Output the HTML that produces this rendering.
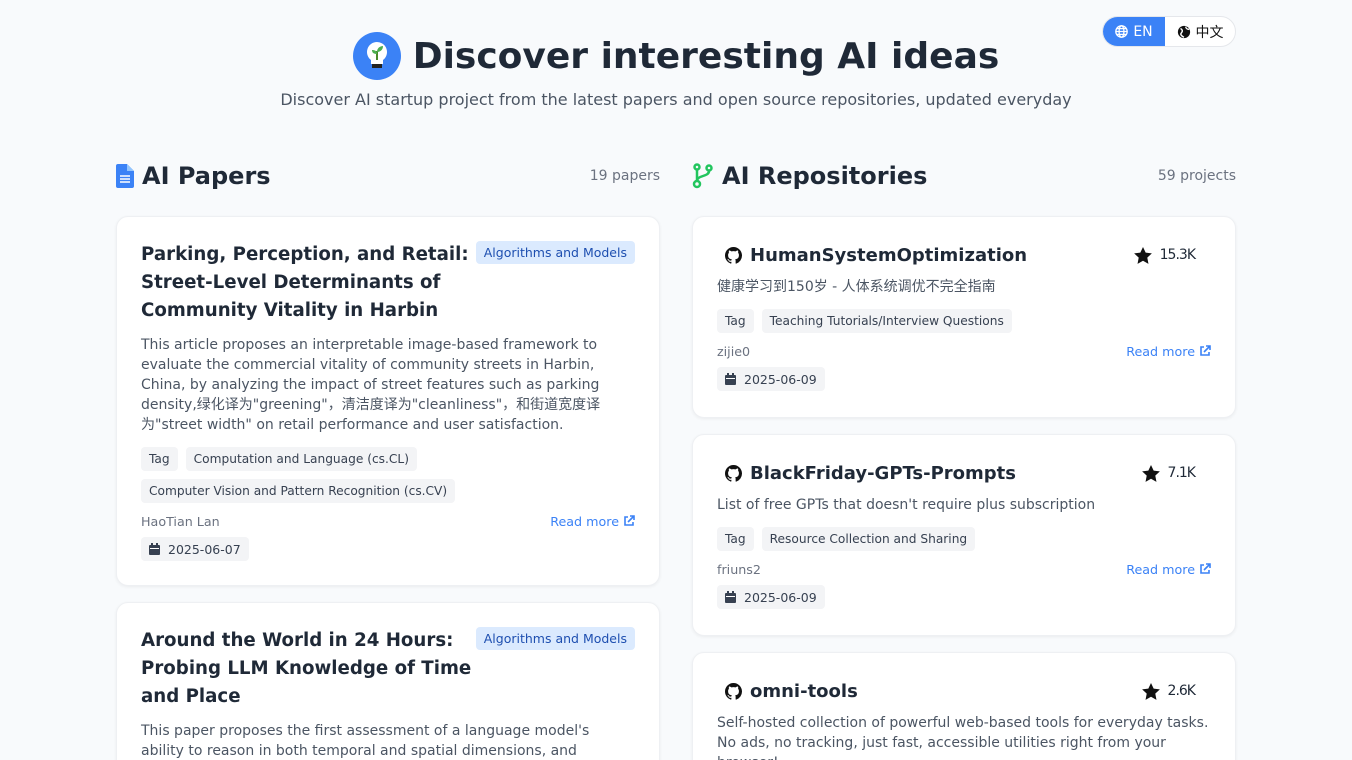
<!DOCTYPE html>
<html><head><meta charset="utf-8"><style>
*{box-sizing:border-box;margin:0;padding:0}
html,body{width:1352px;height:760px;overflow:hidden}
body{background:#f8fafc;font-family:"DejaVu Sans","Liberation Sans","Noto Sans CJK SC",sans-serif;color:#1f2937;position:relative}
.hdr{position:absolute;top:32px;left:0;width:1352px;text-align:center}
.h1{display:flex;justify-content:center;align-items:center;gap:12px;font-size:36px;font-weight:bold;color:#1f2937;height:48px}
.logo{width:48px;height:48px;border-radius:50%;background:#3b82f6;display:flex;align-items:center;justify-content:center}
.sub{margin-top:10px;font-size:16px;color:#4b5563}
.lang{position:absolute;left:1102px;top:16px;width:134px;height:31px;border-radius:16px;background:#fff;border:1px solid #e5e7eb;display:flex;overflow:hidden;font-size:14px}
.lang div{display:flex;align-items:center;justify-content:center;gap:5px}
.en{width:62px;background:#3b82f6;color:#fff}
.zh{flex:1;color:#111}
.col{position:absolute;top:160px;width:544px}
.sh{display:flex;justify-content:space-between;align-items:center;height:32px}
.sh h2{font-size:24px;font-weight:bold;display:flex;align-items:center;gap:8px}
.sh span{font-size:14px;color:#6b7280}
.card{position:absolute;left:0;width:544px;background:#fff;border:1px solid #eef0f3;border-radius:12px;box-shadow:0 1px 3px rgba(0,0,0,.06);padding:24px;overflow:hidden}
.pt{font-size:18.2px;font-weight:bold;line-height:28px;width:342px;color:#1f2937}
.badge{position:absolute;right:24px;top:24px;background:#dbeafe;color:#1e4fb0;font-size:12.5px;padding:4px 8px;border-radius:4px}
.desc{font-size:14px;line-height:20px;color:#4b5563;margin-top:10px}
.tags{display:flex;flex-wrap:wrap;gap:8px;margin-top:12px}
.tag{background:#f3f4f6;color:#374151;font-size:12.2px;height:24px;line-height:24px;padding:0 8px;border-radius:4px}
.meta{display:flex;justify-content:space-between;font-size:12.7px;color:#6b7280;margin-top:8px;height:20px;align-items:center}
.rm{color:#3b82f6;display:flex;align-items:center;gap:4px}
.date{display:inline-flex;align-items:center;gap:8px;background:#f3f4f6;font-size:12.5px;color:#374151;height:24px;padding:0 8px;border-radius:4px;margin-top:6px}
.rt{display:flex;justify-content:space-between;align-items:center;padding:0 16px 0 8px;height:28px}
.rt b{font-size:18px;display:flex;align-items:center;gap:8px}
.star{font-size:14px;display:flex;align-items:center;gap:6px;letter-spacing:-1px}
.star svg{margin-right:2px}
</style></head><body>
<svg width="0" height="0" style="position:absolute"><defs><path id="gh" fill="#111" d="M8 0C3.58 0 0 3.58 0 8c0 3.54 2.29 6.53 5.47 7.59.4.07.55-.17.55-.38v-1.33c-2.23.48-2.7-1.07-2.7-1.07-.36-.92-.89-1.17-.89-1.17-.73-.5.06-.49.06-.49.8.06 1.23.83 1.23.83.71 1.23 1.87.87 2.33.66.07-.52.28-.87.5-1.07-1.78-.2-3.64-.89-3.64-3.95 0-.87.31-1.59.82-2.15-.08-.2-.36-1.02.08-2.12 0 0 .67-.21 2.2.82a7.6 7.6 0 0 1 4 0c1.53-1.04 2.2-.82 2.2-.82.44 1.1.16 1.92.08 2.12.51.56.82 1.27.82 2.15 0 3.07-1.87 3.75-3.65 3.95.29.25.54.73.54 1.48v2.2c0 .21.15.46.55.38A8 8 0 0 0 16 8c0-4.42-3.58-8-8-8z"/></defs></svg>
<div class="hdr">
<div class="h1"><div class="logo"><svg width="30" height="34" viewBox="0 0 30 34"><path d="M15 3a10 10 0 0 0-6 18v4h12v-4a10 10 0 0 0-6-18z" fill="#fff"/><rect x="10" y="25" width="10" height="4" fill="#222"/><path d="M15 21v-9" stroke="#4a8a2a" stroke-width="2"/><path d="M15 13c0-4 3-6 6-6 0 4-3 6-6 6z" fill="#4caf50"/><path d="M15 15c0-3-2-4-5-4 0 3 2 4 5 4z" fill="#4caf50"/></svg></div>Discover interesting AI ideas</div>
<div class="sub">Discover AI startup project from the latest papers and open source repositories, updated everyday</div>
</div>
<div class="lang"><div class="en"><svg width="13" height="13" viewBox="0 0 16 16" fill="none" stroke="#fff" stroke-width="1.6"><circle cx="8" cy="8" r="7"/><ellipse cx="8" cy="8" rx="3" ry="7"/><path d="M1 8h14M2 4.5h12M2 11.5h12"/></svg>EN</div><div class="zh"><svg width="14" height="14" viewBox="0 0 16 16"><circle cx="8" cy="8" r="7" fill="#111"/><path d="M4 4c2 1 3 3 1 5s1 4 3 5M10 2c0 2 2 3 4 3" stroke="#fff" stroke-width="1.6" fill="none"/></svg>中文</div></div>

<div class="col" style="left:116px">
<div class="sh"><h2><svg width="18" height="24" viewBox="0 0 18 24"><path d="M0 2a2 2 0 0 1 2-2h9l7 7v15a2 2 0 0 1-2 2H2a2 2 0 0 1-2-2z" fill="#3b82f6"/><path d="M11 0v7h7" fill="#93c5fd"/><path d="M4 12h10M4 15h10M4 18h10" stroke="#fff" stroke-width="1.5"/></svg>AI Papers</h2><span>19 papers</span></div>
<div class="card" style="top:56px;height:370px">
<div class="pt">Parking, Perception, and Retail: Street-Level Determinants of Community Vitality in Harbin</div>
<div class="badge">Algorithms and Models</div>
<div class="desc">This article proposes an interpretable image-based framework to evaluate the commercial vitality of community streets in Harbin, China, by analyzing the impact of street features such as parking density,绿化译为"greening"，清洁度译为"cleanliness"，和街道宽度译为"street width" on retail performance and user satisfaction.</div>
<div class="tags"><span class="tag">Tag</span><span class="tag">Computation and Language (cs.CL)</span><span class="tag">Computer Vision and Pattern Recognition (cs.CV)</span></div>
<div class="meta"><span>HaoTian Lan</span><span class="rm">Read more <svg width="12" height="12" viewBox="0 0 12 12" fill="none" stroke="#3b82f6" stroke-width="1.6"><path d="M5 2H2v8h8V7M7 1h4v4M11 1L5 7"/></svg></span></div>
<div class="date"><svg width="11" height="12" viewBox="0 0 11 12"><rect x="0" y="2" width="11" height="10" rx="1" fill="#374151"/><rect x="2" y="0" width="2" height="3" fill="#374151"/><rect x="7" y="0" width="2" height="3" fill="#374151"/><rect x="1" y="5" width="9" height="1" fill="#fff"/></svg>2025-06-07</div>
</div>
<div class="card" style="top:442px;height:300px">
<div class="pt">Around the World in 24 Hours: Probing LLM Knowledge of Time and Place</div>
<div class="badge">Algorithms and Models</div>
<div class="desc">This paper proposes the first assessment of a language model's ability to reason in both temporal and spatial dimensions, and</div>
</div>
</div>

<div class="col" style="left:692px">
<div class="sh"><h2><svg width="22" height="26" viewBox="0 0 22 26" fill="none" stroke="#22c55e" stroke-width="2.5"><circle cx="5" cy="21" r="3"/><circle cx="5" cy="4" r="2.5"/><circle cx="17" cy="5" r="2.5"/><path d="M5 7v11M17 8c0 6-12 4-12 10"/></svg>AI Repositories</h2><span>59 projects</span></div>
<div class="card" style="top:56px;height:202px">
<div class="rt"><b><svg width="17" height="17" viewBox="0 0 16 16"><use href="#gh"/></svg>HumanSystemOptimization</b><span class="star"><svg width="18" height="17" viewBox="0 0 24 23"><path d="M12 0l3.6 7.6 8.4 1-6.2 5.8 1.6 8.4L12 18.6 4.6 22.8l1.6-8.4L0 8.6l8.4-1z" fill="#111"/></svg>15.3K</span></div>
<div class="desc" style="margin-top:8px">健康学习到150岁 - 人体系统调优不完全指南</div>
<div class="tags"><span class="tag">Tag</span><span class="tag">Teaching Tutorials/Interview Questions</span></div>
<div class="meta"><span>zijie0</span><span class="rm">Read more <svg width="12" height="12" viewBox="0 0 12 12" fill="none" stroke="#3b82f6" stroke-width="1.6"><path d="M5 2H2v8h8V7M7 1h4v4M11 1L5 7"/></svg></span></div>
<div class="date"><svg width="11" height="12" viewBox="0 0 11 12"><rect x="0" y="2" width="11" height="10" rx="1" fill="#374151"/><rect x="2" y="0" width="2" height="3" fill="#374151"/><rect x="7" y="0" width="2" height="3" fill="#374151"/><rect x="1" y="5" width="9" height="1" fill="#fff"/></svg>2025-06-09</div>
</div>
<div class="card" style="top:274px;height:202px">
<div class="rt"><b><svg width="17" height="17" viewBox="0 0 16 16"><use href="#gh"/></svg>BlackFriday-GPTs-Prompts</b><span class="star"><svg width="18" height="17" viewBox="0 0 24 23"><path d="M12 0l3.6 7.6 8.4 1-6.2 5.8 1.6 8.4L12 18.6 4.6 22.8l1.6-8.4L0 8.6l8.4-1z" fill="#111"/></svg>7.1K</span></div>
<div class="desc" style="margin-top:8px">List of free GPTs that doesn't require plus subscription</div>
<div class="tags"><span class="tag">Tag</span><span class="tag">Resource Collection and Sharing</span></div>
<div class="meta"><span>friuns2</span><span class="rm">Read more <svg width="12" height="12" viewBox="0 0 12 12" fill="none" stroke="#3b82f6" stroke-width="1.6"><path d="M5 2H2v8h8V7M7 1h4v4M11 1L5 7"/></svg></span></div>
<div class="date"><svg width="11" height="12" viewBox="0 0 11 12"><rect x="0" y="2" width="11" height="10" rx="1" fill="#374151"/><rect x="2" y="0" width="2" height="3" fill="#374151"/><rect x="7" y="0" width="2" height="3" fill="#374151"/><rect x="1" y="5" width="9" height="1" fill="#fff"/></svg>2025-06-09</div>
</div>
<div class="card" style="top:492px;height:202px">
<div class="rt"><b><svg width="17" height="17" viewBox="0 0 16 16"><use href="#gh"/></svg>omni-tools</b><span class="star"><svg width="18" height="17" viewBox="0 0 24 23"><path d="M12 0l3.6 7.6 8.4 1-6.2 5.8 1.6 8.4L12 18.6 4.6 22.8l1.6-8.4L0 8.6l8.4-1z" fill="#111"/></svg>2.6K</span></div>
<div class="desc" style="margin-top:8px">Self-hosted collection of powerful web-based tools for everyday tasks. No ads, no tracking, just fast, accessible utilities right from your browser!</div>
</div>
</div>
</body></html>
